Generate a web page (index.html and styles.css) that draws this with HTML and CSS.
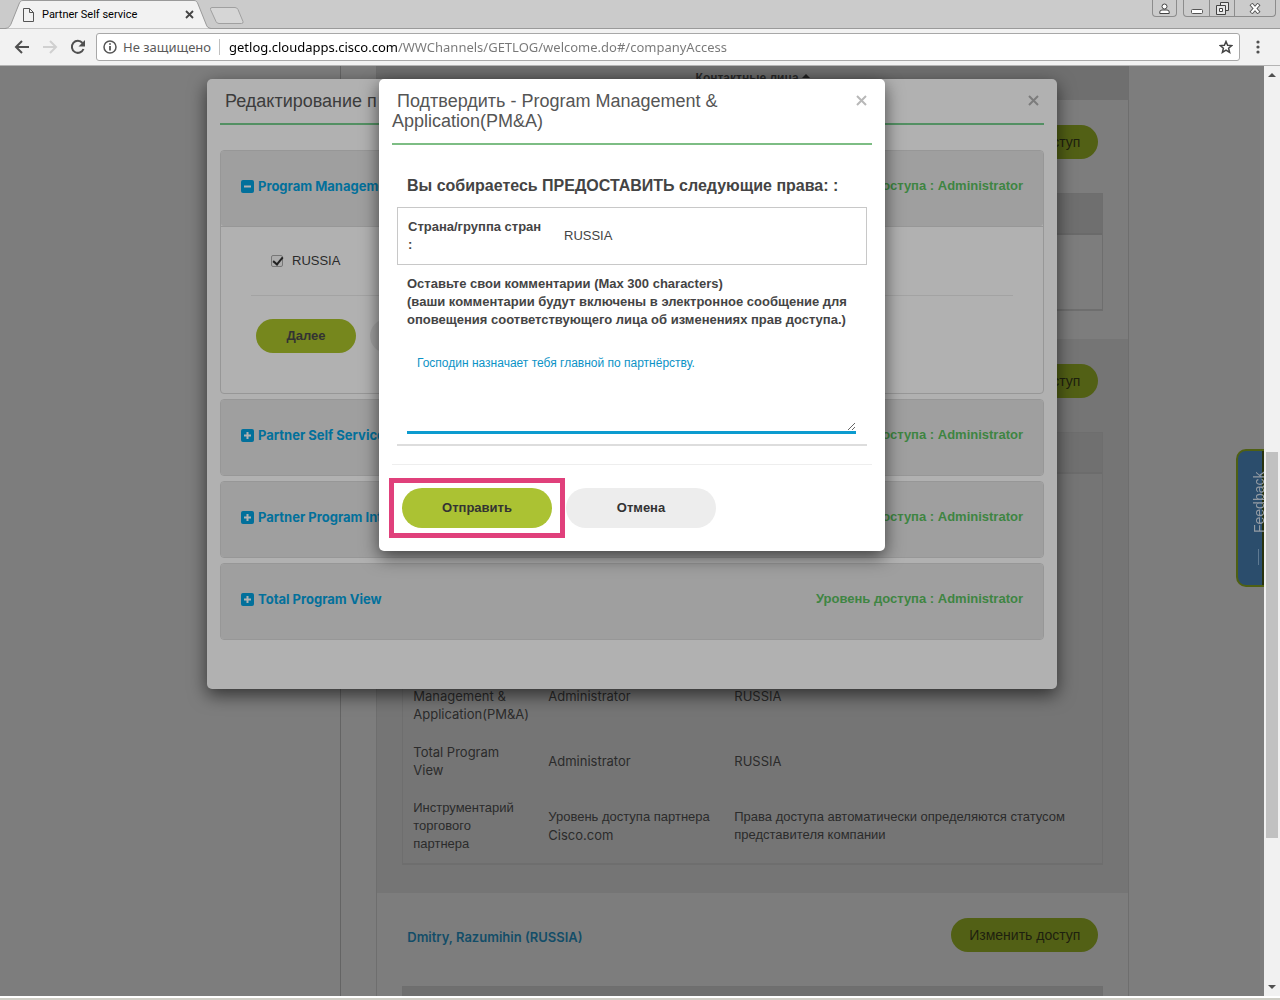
FILE: index.html
```html
<!DOCTYPE html>
<html lang="ru">
<head>
    <title>Partner Self service</title>
    <meta charset="utf-8">
    <link rel="stylesheet" href="styles.css">
</head>
<body>
    <header class="browser">
        <div class="tab-strip">
            <div class="tab">
                <svg class="tab-shape" width="206" height="29" viewBox="0 0 206 29">
                    <path d="M0 28.5 C4 28 5 26 6 24 L14 4 C15 1.500 16 .5 18 .5 L189 .5 C191 .5 192 1.500 193 4 L201 24 C202 27 203 28 206 28.500" fill="#f2f2f2" stroke="#9a9a9a"/>
                </svg>
                <svg class="tab-icon" width="11" height="14" viewBox="0 0 11 14" fill="none" stroke="#555">
                    <path d="M.5.5h6l4 4v9H.5zM6.500.5v4h4"/>
                </svg>
                <span class="tab-title">Partner Self service</span>
                <button class="tab-close" aria-label="Закрыть вкладку">
                    <svg width="9" height="9" viewBox="0 0 9 9" stroke="#444" stroke-width="1.800"><path d="M1 1l7 7M8 1l-7 7"/></svg>
                </button>
            </div>
            <button class="new-tab" aria-label="Новая вкладка">
                <svg width="36" height="19" viewBox="0 0 36 19"><path d="M3 1.500h23q2 0 3 2l5 12q.5 2-1.500 2H10q-2 0-3-2L1.500 3.500q-.5-2 1.500-2z" fill="#d6d6d6" stroke="#a0a0a0"/></svg>
            </button>
            <div class="window-buttons">
                <button class="win-btn user" aria-label="Профиль">
                    <svg width="11" height="11" viewBox="0 0 11 11" fill="#fff" stroke="#444"><circle cx="5.500" cy="3.500" r="2.500"/><path d="M.8 10.500v-1.500q0-2 2.200-2h5q2.200 0 2.200 2v1.500z"/></svg>
                </button>
                <div class="win-group">
                    <button class="win-btn" aria-label="Свернуть">
                        <svg width="12" height="12" viewBox="0 0 12 12" fill="#fff" stroke="#555"><rect x=".5" y="7.500" width="11" height="4" rx="1"/></svg>
                    </button>
                    <button class="win-btn" aria-label="Развернуть">
                        <svg width="13" height="13" viewBox="0 0 13 13" fill="#e6e6e6" stroke="#444"><path d="M4.500.5h8v8h-8z"/><path d="M.5 3.500h9v9h-9z"/><path d="M3.500 6.500h3v3h-3z" fill="#fff"/></svg>
                    </button>
                    <button class="win-btn close-win" aria-label="Закрыть">
                        <svg width="12" height="11" viewBox="0 0 12 11"><path d="M2 1l8 9M10 1l-8 9" stroke="#555" stroke-width="4"/><path d="M2.500 1.500l7 8M9.500 1.500l-7 8" stroke="#fff" stroke-width="2"/></svg>
                    </button>
                </div>
            </div>
        </div>
        <div class="toolbar">
            <button class="nav-btn" aria-label="Назад">
                <svg width="16" height="14" viewBox="0 0 16 14" fill="none" stroke="#505050" stroke-width="2"><path d="M15 7H2M8 1L2 7l6 6"/></svg>
            </button>
            <button class="nav-btn" aria-label="Вперёд">
                <svg width="16" height="14" viewBox="0 0 16 14" fill="none" stroke="#d0d0d0" stroke-width="2"><path d="M1 7h13M8 1l6 6-6 6"/></svg>
            </button>
            <button class="nav-btn" aria-label="Обновить">
                <svg width="16" height="16" viewBox="0 0 16 16" fill="none" stroke="#505050" stroke-width="2"><path d="M13.500 10A6 6 0 1 1 12.500 4"/><path d="M15 1v6.500H8.500z" fill="#505050" stroke="none"/></svg>
            </button>
            <div class="address-bar">
                <svg width="14" height="14" viewBox="0 0 14 14" fill="none" stroke="#555" stroke-width="1.500"><circle cx="7" cy="7" r="6"/><path d="M7 6v4.500M7 3.300v1.500" stroke-width="1.800"/></svg>
                <label class="not-secure" for="url">Не защищено</label>
                <input id="url" class="url" type="text" value="getlog.cloudapps.cisco.com/WWChannels/GETLOG/welcome.do#/companyAccess">
                <svg width="14" height="14" viewBox="0 0 14 14" fill="none" stroke="#444" stroke-width="1.500"><path d="M7 1.500l1.600 3.800 4.200.3-3.200 2.700 1 4.100L7 10.200l-3.600 2.200 1-4.100L1.200 5.600l4.200-.3z"/></svg>
            </div>
            <button class="nav-btn" aria-label="Меню">
                <svg width="4" height="14" viewBox="0 0 4 14" fill="#505050"><circle cx="2" cy="2" r="1.600"/><circle cx="2" cy="7" r="1.600"/><circle cx="2" cy="12" r="1.600"/></svg>
            </button>
        </div>
    </header>

    <div class="viewport">
        <div class="page">
            <div class="side-column"></div>
            <main class="contacts">
                <div class="contacts-header">Контактные лица <span class="sort-arrow"></span></div>

                <section class="contact">
                    <div class="contact-head">
                        <button class="access-btn">Изменить доступ</button>
                    </div>
                    <table class="rights">
                        <tr class="rights-head"><th colspan="3"></th></tr>
                        <tr class="row-short"><td colspan="3"></td></tr>
                    </table>
                </section>

                <section class="contact shaded">
                    <div class="contact-head">
                        <button class="access-btn">Изменить доступ</button>
                    </div>
                    <table class="rights">
                        <tr class="rights-head"><th class="col-tool"></th><th class="col-level"></th><th></th></tr>
                        <tr class="row-tall"><td colspan="3"></td></tr>
                        <tr>
                            <td class="latin">Program Management &amp; Application(PM&amp;A)</td>
                            <td class="latin">Administrator</td>
                            <td class="latin">RUSSIA</td>
                        </tr>
                        <tr>
                            <td class="latin">Total Program View</td>
                            <td class="latin">Administrator</td>
                            <td class="latin">RUSSIA</td>
                        </tr>
                        <tr>
                            <td>Инструментарий торгового партнера</td>
                            <td>Уровень доступа партнера <span class="latin">Cisco.com</span></td>
                            <td>Права доступа автоматически определяются статусом представителя компании</td>
                        </tr>
                    </table>
                </section>

                <section class="contact">
                    <div class="contact-head">
                        <a class="contact-name" href="#">Dmitry, Razumihin (RUSSIA)</a>
                        <button class="access-btn">Изменить доступ</button>
                    </div>
                    <table class="rights">
                        <tr class="rights-head"><th colspan="3"></th></tr>
                    </table>
                </section>
            </main>

            <button class="feedback"><span class="feedback-line"></span>Feedback</button>

            <div class="modal edit-modal">
                <div class="modal-header">
                    <h4 class="modal-title">&nbsp;Редактирование п</h4>
                    <button class="modal-close" aria-label="Закрыть"><svg width="11" height="11" viewBox="0 0 11 11"><path d="M1 1l9 9M10 1l-9 9"/></svg></button>
                </div>
                <div class="accordion">
                    <div class="panel">
                        <div class="panel-heading">
                            <a class="panel-link" href="#"><svg width="13" height="13" viewBox="0 0 13 13"><rect width="13" height="13" rx="2"/><path d="M3 6.500h7"/></svg>Program Management</a>
                            <span class="level">Уровень доступа : Administrator</span>
                        </div>
                        <div class="panel-body">
                            <label class="country"><input type="checkbox" checked>RUSSIA</label>
                            <div class="panel-actions">
                                <button class="btn btn-next">Далее</button>
                                <button class="btn btn-back" aria-label="Отмена"></button>
                            </div>
                        </div>
                    </div>
                    <div class="panel">
                        <div class="panel-heading">
                            <a class="panel-link" href="#"><svg width="13" height="13" viewBox="0 0 13 13"><rect width="13" height="13" rx="2"/><path d="M3 6.500h7M6.500 3v7"/></svg>Partner Self Service</a>
                            <span class="level">Уровень доступа : Administrator</span>
                        </div>
                    </div>
                    <div class="panel">
                        <div class="panel-heading">
                            <a class="panel-link" href="#"><svg width="13" height="13" viewBox="0 0 13 13"><rect width="13" height="13" rx="2"/><path d="M3 6.500h7M6.500 3v7"/></svg>Partner Program Intelligence</a>
                            <span class="level">Уровень доступа : Administrator</span>
                        </div>
                    </div>
                    <div class="panel">
                        <div class="panel-heading">
                            <a class="panel-link" href="#"><svg width="13" height="13" viewBox="0 0 13 13"><rect width="13" height="13" rx="2"/><path d="M3 6.500h7M6.500 3v7"/></svg>Total Program View</a>
                            <span class="level">Уровень доступа : Administrator</span>
                        </div>
                    </div>
                </div>
            </div>

            <div class="modal confirm-modal">
                <div class="modal-header">
                    <h4 class="modal-title">&nbsp;Подтвердить - Program Management &amp; Application(PM&amp;A)</h4>
                    <button class="modal-close" aria-label="Закрыть"><svg width="11" height="11" viewBox="0 0 11 11"><path d="M1 1l9 9M10 1l-9 9"/></svg></button>
                </div>
                <form class="confirm-form">
                    <h5 class="grant-title">Вы собираетесь ПРЕДОСТАВИТЬ следующие права: :</h5>
                    <dl class="grant-box">
                        <dt>Страна/группа стран :</dt>
                        <dd>RUSSIA</dd>
                    </dl>
                    <label class="comment-label" for="comment">Оставьте свои комментарии (Max 300 characters)<br>(ваши комментарии будут включены в электронное сообщение для оповещения соответствующего лица об изменениях прав доступа.)</label>
                    <textarea id="comment" class="comment" maxlength="300" spellcheck="false">Господин назначает тебя главной по партнёрству.</textarea>
                </form>
                <div class="modal-actions">
                    <span class="highlight"><button class="btn btn-send">Отправить</button></span>
                    <button class="btn btn-cancel">Отмена</button>
                </div>
            </div>
        </div>

        <div class="scrollbar">
            <span class="arrow-up"></span>
            <div class="track">
                <div class="track-before"></div>
                <div class="thumb"></div>
                <div class="track-after"></div>
            </div>
            <span class="arrow-down"></span>
        </div>
    </div>
    <div class="window-edge"></div>
</body>
</html>
```

FILE: styles.css
```css
* {
    box-sizing: border-box;
}
body {
    display: flex;
    flex-direction: column;
    height: 100vh;
    margin: 0;
    overflow: hidden;
    font-family: "Liberation Sans", Arial, sans-serif;
    font-size: 13px;
    line-height: 18px;
    color: #2b2b2b;
}
button {
    padding: 0;
    border: none;
    background: none;
    font: inherit;
    color: inherit;
    cursor: pointer;
}
svg {
    display: block;
    flex: none;
}

/* browser window */
.browser {
    flex: none;
    font-family: "Noto Sans", sans-serif;
}
.tab-strip {
    display: flex;
    height: 29px;
    padding-left: 5px;
    background-color: #cbcbcb;
    border-bottom: 1px solid #9a9a9a;
}
.tab {
    position: relative;
    display: flex;
    align-items: center;
    width: 204px;
    height: 29px;
    padding: 0 15px 0 18px;
    font-family: Roboto, sans-serif;
    font-size: 11px;
    color: #000;
}
.tab-shape {
    position: absolute;
    left: 0;
    top: 0;
}
.tab-icon, .tab-title, .tab-close {
    position: relative;
}
.tab-title {
    flex: 1;
    margin-left: 8px;
}
.new-tab {
    height: 29px;
    padding-top: 1px;
}
.window-buttons {
    display: flex;
    gap: 6px;
    margin-left: auto;
    padding-right: 4px;
}
.win-btn {
    display: flex;
    align-items: center;
    justify-content: center;
    width: 25px;
    height: 16px;
}
.win-btn.user, .win-group {
    height: 17px;
    border: 1px solid #8c8c8c;
    border-top: none;
    border-radius: 0 0 4px 4px;
}
.win-group {
    display: flex;
}
.win-btn + .win-btn {
    border-left: 1px solid #8c8c8c;
}
.close-win {
    width: 41px;
}
.toolbar {
    display: flex;
    align-items: center;
    gap: 12px;
    height: 37px;
    padding: 0 14px;
    background-color: #f2f2f2;
    border-bottom: 1px solid #b4b4b4;
}
.nav-btn {
    display: flex;
    justify-content: center;
    flex: none;
    width: 16px;
}
.address-bar {
    display: flex;
    align-items: center;
    flex: 1;
    height: 28px;
    margin: 0 -2px;
    padding: 0 6px;
    background-color: #fff;
    border: 1px solid #a8a8a8;
    border-radius: 3px;
    font-size: 13px;
}
.not-secure {
    margin-left: 6px;
    padding-right: 8px;
    border-right: 1px solid #c0c0c0;
    line-height: 16px;
    color: #5a5a5a;
}
/* host is black, the rest of the address is grey */
.url {
    flex: 1;
    min-width: 0;
    padding: 0 0 0 9px;
    border: none;
    outline: none;
    font: inherit;
    line-height: 20px;
    color: transparent;
    background: linear-gradient(to right, #000 178px, #777 178px);
    -webkit-background-clip: text;
    background-clip: text;
}

/* page under the dialogs */
.viewport {
    display: flex;
    flex: 1;
    min-height: 0;
}
.page {
    position: relative;
    display: flex;
    flex: 1;
    overflow: hidden;
    background-color: #7d7d7d;
}
.side-column {
    flex: none;
    width: 27%;
    border-right: 1px solid #646464;
}
.contacts {
    flex: none;
    width: 753px;
    margin-left: 35px;
    border: solid #6e6e6e;
    border-width: 0 1px;
}
.contacts-header {
    height: 34px;
    padding-top: 3px;
    background-color: #6f6f6f;
    font-size: 12px;
    font-weight: bold;
    text-align: center;
}
.sort-arrow {
    display: inline-block;
    border: 4px solid transparent;
    border-top: none;
    border-bottom-color: #222;
    vertical-align: 4px;
}
.contact {
    padding: 25px 25px 28px;
}
.contact.shaded {
    background-color: #757575;
}
.contact-head {
    display: flex;
    align-items: center;
    margin-bottom: 34px;
    padding: 0 5px;
}
.contact-name {
    padding-top: 4px;
    font-family: Inter, sans-serif;
    font-weight: 600;
    color: #134d68;
    text-decoration: none;
}
.access-btn {
    width: 147px;
    height: 34px;
    margin-left: auto;
    border-radius: 17px;
    background-color: #526015;
    font-size: 14px;
    color: #1e210f;
}
.rights {
    width: 100%;
    table-layout: fixed;
    border: 1px solid #6e6e6e;
    border-bottom-width: 2px;
    border-spacing: 0;
}
.rights td, .rights th {
    padding: 10px;
    text-align: left;
    vertical-align: middle;
}
.rights-head th {
    height: 41px;
    background-color: #6f6f6f;
    border-bottom: 2px solid #6a6a6a;
}
.shaded .rights-head th {
    background-color: #707070;
    border-color: #6c6c6c;
}
.col-tool {
    width: 135px;
}
.col-level {
    width: 186px;
}
.row-short td {
    height: 74px;
}
.row-tall td {
    height: 185px;
}
.latin {
    font-family: Inter, sans-serif;
}
.feedback {
    position: absolute;
    right: -12px;
    top: 383px;
    display: flex;
    align-items: center;
    justify-content: center;
    gap: 16px;
    width: 40px;
    height: 138px;
    padding-right: 6px;
    border: 2px solid #4f6013;
    border-radius: 0 10px 10px 0;
    background: linear-gradient(to left, #2b4d6c 24px, #28330f 24px);
    writing-mode: vertical-rl;
    transform: rotate(180deg);
    font-size: 14px;
    color: #939ba3;
}
.feedback-line {
    width: 1px;
    height: 16px;
    background-color: #5f7a92;
}

/* dialogs */
.modal {
    position: absolute;
    top: 13px;
    left: 50%;
    transform: translateX(-50%);
    padding: 12px 13px 23px;
    border-radius: 5px;
    box-shadow: 0 6px 18px rgba(0, 0, 0, 0.6);
}
.edit-modal {
    width: 850px;
    padding-bottom: 49px;
    background-color: #b1b1b1;
}
.confirm-modal {
    width: 506px;
    background-color: #fff;
    color: #444;
}
.modal-header {
    display: flex;
    align-items: flex-start;
    padding-bottom: 12px;
    border-bottom: 2px solid #7dbd84;
}
.edit-modal .modal-header {
    border-color: #539063;
}
.modal-title {
    flex: 1;
    margin: 0;
    font-size: 18px;
    font-weight: normal;
    line-height: 20px;
    color: #555;
}
.edit-modal .modal-title {
    color: #3c3c3c;
}
.modal-close {
    margin-left: 60px;
    padding: 4px 5px;
    stroke: #b8b8b8;
    stroke-width: 2;
}
.edit-modal .modal-close {
    stroke: #7c7c7c;
}
.accordion {
    display: flex;
    flex-direction: column;
    gap: 5px;
    margin-top: 25px;
}
.panel {
    border: 1px solid #979797;
    border-radius: 4px;
}
.panel-heading {
    display: flex;
    justify-content: space-between;
    padding: 26px 20px 31px;
    border-radius: 3px;
    background-color: #9f9f9f;
    font-weight: bold;
}
.panel-link {
    display: flex;
    align-items: center;
    gap: 4px;
    font-family: Inter, sans-serif;
    color: #02709b;
    text-decoration: none;
}
.panel-link svg {
    fill: #02709b;
}
.panel-link path {
    stroke: #b1b1b1;
    stroke-width: 2;
}
.level {
    color: #3e8542;
}
.panel-body {
    padding: 25px 30px 40px;
    border-top: 1px solid #979797;
}
.country {
    display: flex;
    align-items: center;
    gap: 9px;
    padding: 0 20px 25px;
    border-bottom: 1px solid #a3a3a3;
}
.country input {
    appearance: none;
    width: 12px;
    height: 12px;
    margin: 0;
    border: 1px solid #777;
    border-radius: 2px;
    background-color: #adadad;
}
.country input:checked::after {
    content: "";
    display: block;
    width: 4px;
    height: 8px;
    margin: -1px 0 0 3px;
    border: solid #222;
    border-width: 0 2px 2px 0;
    transform: rotate(40deg);
}
.panel-actions {
    display: flex;
    gap: 14px;
    padding: 23px 5px 0;
}
.btn {
    width: 150px;
    height: 40px;
    border-radius: 20px;
    font-weight: bold;
    color: #333;
}
.btn-next, .btn-back {
    width: 100px;
    height: 34px;
    background-color: #76871d;
}
.btn-back {
    background-color: #a3a3a3;
}
.confirm-form {
    margin: 0 5px;
    padding-bottom: 10px;
    border-bottom: 2px solid #ddd;
}
.grant-title {
    margin: 31px 10px 11px;
    font-size: 16px;
    line-height: 20px;
}
.grant-box {
    display: flex;
    align-items: center;
    gap: 20px;
    margin: 0;
    padding: 10px;
    border: 1px solid #c8c8c8;
}
.grant-box dt {
    width: 136px;
    font-weight: bold;
}
.grant-box dd {
    margin: 0;
}
.comment-label {
    display: block;
    margin: 10px 10px 0;
    font-weight: bold;
}
.comment {
    display: block;
    width: calc(100% - 21px);
    height: 90px;
    margin: 15px 10px 0;
    padding: 10px;
    border: none;
    border-bottom: 3px solid #0c9bcf;
    outline: none;
    font: inherit;
    font-size: 12px;
    color: #0c93c6;
}
.modal-actions {
    display: flex;
    gap: 14px;
    margin-top: 18px;
    padding: 23px 10px 0;
    border-top: 1px solid #eee;
}
.highlight {
    position: relative;
}
.highlight::after {
    content: "";
    position: absolute;
    inset: -10px -13px;
    border: 5px solid #e0407b;
    pointer-events: none;
}
.btn-send {
    background-color: #abc233;
}
.btn-cancel {
    background-color: #ededed;
}

/* scrollbar */
.scrollbar {
    display: flex;
    flex-direction: column;
    align-items: center;
    flex: none;
    width: 16px;
    padding: 7px 0;
    background-color: #f1f1f1;
}
.arrow-up, .arrow-down {
    border: 4px solid transparent;
}
.arrow-up {
    border-top: none;
    border-bottom-color: #505050;
}
.arrow-down {
    border-bottom: none;
    border-top-color: #505050;
}
.track {
    display: flex;
    flex-direction: column;
    flex: 1;
    width: 12px;
}
.track-before {
    flex: 375;
}
.thumb {
    flex: 386;
    background-color: #c1c1c1;
}
.track-after {
    flex: 147;
}
.window-edge {
    flex: none;
    height: 4px;
    border-top: 2px solid #fff;
    background-color: #cfcec6;
}
```
